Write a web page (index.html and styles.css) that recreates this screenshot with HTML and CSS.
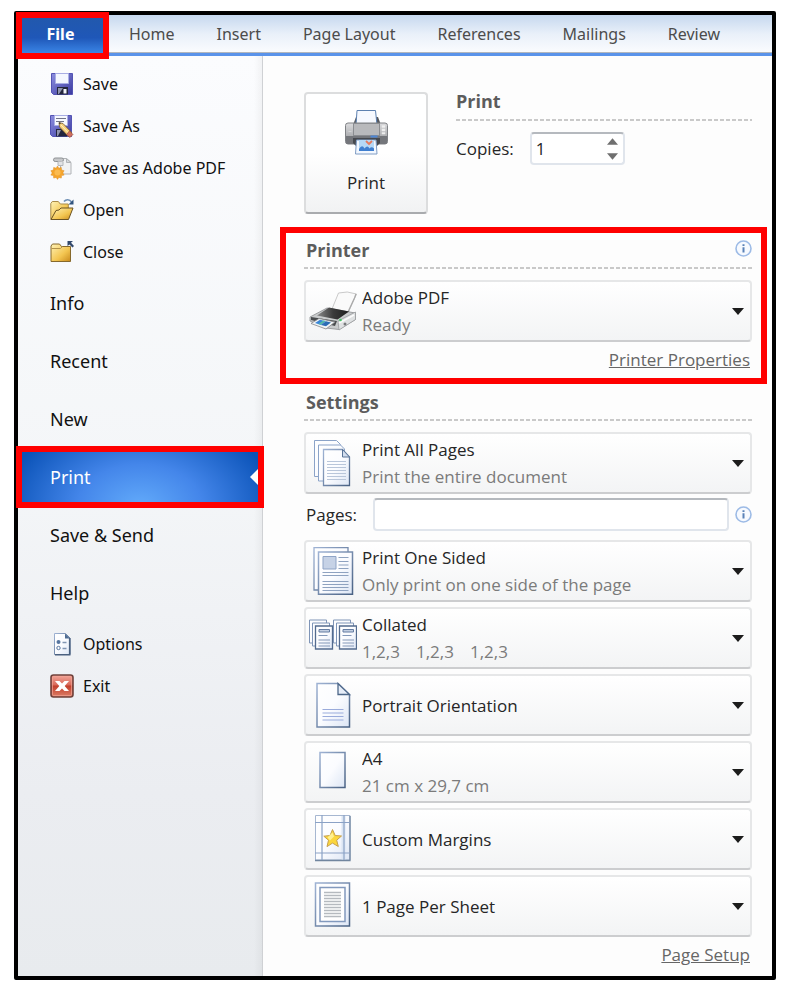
FILE: index.html
```html
<!DOCTYPE html>
<html lang="en">
<head>
  <meta charset="UTF-8">
  <meta name="viewport" content="width=device-width, initial-scale=1">
  <title>Print</title>
  <link rel="stylesheet" href="styles.css">
</head>
<body>

  <!-- shared gradients and symbols -->
  <svg class="defs" width="0" height="0" aria-hidden="true">
    <defs>
      <linearGradient id="paper" x1="0" y1="0" x2="1" y2="1">
        <stop offset="0" stop-color="#ffffff"/>
        <stop offset="0.5" stop-color="#fbfcff"/>
        <stop offset="1" stop-color="#dde6f5"/>
      </linearGradient>
      <linearGradient id="edge" x1="0" y1="0" x2="1" y2="1">
        <stop offset="0" stop-color="#9fb3d4"/>
        <stop offset="1" stop-color="#4a6284"/>
      </linearGradient>
      <linearGradient id="disk" x1="0" y1="0" x2="1" y2="1">
        <stop offset="0" stop-color="#8d8fe0"/>
        <stop offset="1" stop-color="#3a3aa0"/>
      </linearGradient>
      <linearGradient id="folder" x1="0" y1="0" x2="1" y2="1">
        <stop offset="0" stop-color="#fff3b8"/>
        <stop offset="0.6" stop-color="#f3c550"/>
        <stop offset="1" stop-color="#c98a1c"/>
      </linearGradient>
      <linearGradient id="red" x1="0" y1="0" x2="0" y2="1">
        <stop offset="0" stop-color="#f3a79b"/>
        <stop offset="0.45" stop-color="#d96a5a"/>
        <stop offset="0.5" stop-color="#c23f2c"/>
        <stop offset="1" stop-color="#dd8068"/>
      </linearGradient>
      <linearGradient id="metal" x1="0" y1="0" x2="0" y2="1">
        <stop offset="0" stop-color="#dcdcde"/>
        <stop offset="0.6" stop-color="#b0b1b4"/>
        <stop offset="1" stop-color="#7b7d82"/>
      </linearGradient>
      <linearGradient id="lid" x1="0" y1="0" x2="1" y2="0">
        <stop offset="0" stop-color="#8a8a8a"/>
        <stop offset="0.5" stop-color="#3b3b3b"/>
        <stop offset="1" stop-color="#1e1e1e"/>
      </linearGradient>
      <symbol id="caret" viewBox="0 0 12 7"><path d="M0 0h12L6 7z" fill="#1c1c1c"/></symbol>
      <symbol id="info" viewBox="0 0 17 17">
        <circle cx="8.5" cy="8.5" r="7.5" fill="#f7faff" stroke="#9dbbe6" stroke-width="1.6"/>
        <path d="M7.5 4.3h2v1.8h-2zM7.5 7.3h2v5.2h-2z" fill="#5b82b8"/>
      </symbol>
    </defs>
  </svg>

  <div class="window">

    <nav class="ribbon" aria-label="Ribbon">
      <a class="tab tab-file" href="#">File</a>
      <a class="tab" href="#">Home</a>
      <a class="tab" href="#">Insert</a>
      <a class="tab" href="#">Page Layout</a>
      <a class="tab" href="#">References</a>
      <a class="tab" href="#">Mailings</a>
      <a class="tab" href="#">Review</a>
    </nav>

    <div class="backstage">

      <nav class="sidebar" aria-label="File menu">
        <a class="command" href="#">
          <svg class="command-icon" viewBox="0 0 24 24">
            <path d="M1.500 1.500h21v21h-19l-2-2z" fill="url(#disk)" stroke="#5454b4"/>
            <path d="M5.500 1.500h13v10h-13z" fill="#f4f7ff" stroke="#a9aee4"/>
            <path d="M7 15h11v7.500H7z" fill="#23263c"/>
            <path d="M8 16h5l-4 6H8z" fill="#8f93ac"/>
            <path d="M13.500 17h3v4.500h-3z" fill="#f1f3fa"/>
          </svg>
          Save
        </a>
        <a class="command" href="#">
          <svg class="command-icon" viewBox="0 0 24 24">
            <path d="M.5 1.500h21v21h-19l-2-2z" fill="url(#disk)" stroke="#5454b4"/>
            <path d="M4.500 1.500h13v10h-13z" fill="#f7f9ff" stroke="#a9aee4"/>
            <path d="M6 4.500h10M6 7.500h8" stroke="#707488"/>
            <path d="M6 15h11v7.500H6z" fill="#23263c"/>
            <path d="M7 16h4l-3 6H7z" fill="#8f93ac"/>
            <path d="M9 8.500l4 1 9 9.500-3.500 3.500-9-9.500z" fill="#f4cf7b" stroke="#7c5a2c" stroke-width=".8"/>
            <path d="M11 11l9 9.500" stroke="#fff1c0"/>
            <path d="M19.500 17l3.500 3.500-3 3-3.500-3z" fill="#d0705f" stroke="#8f4436" stroke-width=".6"/>
            <path d="M9 8.500l2 .5-1.500 1.500z" fill="#2b2b2b"/>
          </svg>
          Save As
        </a>
        <a class="command" href="#">
          <svg class="command-icon" viewBox="0 0 24 24">
            <path d="M10.500 2.500h6l4.500 4v11.500H10.500z" fill="#f1f2f3" stroke="#b0b3b6"/>
            <path d="M16.500 2.500v4H21z" fill="#d4d7da" stroke="#b0b3b6"/>
            <rect x="3.500" y="2" width="10" height="3.500" rx="1.700" fill="#c6c8ca" stroke="#8f9295"/>
            <path d="M8 5.500v4h5v-4" fill="#e2e3e5" stroke="#b4b7ba"/>
            <path d="M7.500 10l1.300 2.200 2.500-.8.200 2.600 2.600.7-1.300 2.200 1.300 2.200-2.600.5-.2 2.500-2.500-.7-1.300 2-1.300-2-2.500.7-.2-2.500-2.600-.5 1.300-2.200L.9 14.700l2.600-.7.200-2.600 2.500.8z" fill="#f5a52c" stroke="#e08d1c" stroke-width=".5"/>
            <circle cx="7.500" cy="16.500" r="3" fill="#fbbb50"/>
          </svg>
          Save as Adobe PDF
        </a>
        <a class="command" href="#">
          <svg class="command-icon" viewBox="0 0 24 24">
            <path d="M.8 21.500V5.500l1.500-2h6l2 2.500h8v4" fill="url(#folder)" stroke="#a98a48"/>
            <path d="M1 21.500L6 12.500l3-.5 2-2h12l-4.500 11.500z" fill="url(#folder)" stroke="#6b5323"/>
            <path d="M14 3.500c2-2.500 5.500-2.500 7.500.5" fill="none" stroke="#6f8fb4" stroke-width="1.600"/>
            <path d="M23.500 1.500v5h-5z" fill="#31547f"/>
          </svg>
          Open
        </a>
        <a class="command" href="#">
          <svg class="command-icon" viewBox="0 0 24 24">
            <path d="M1 21.500V6l1.500-2h7l2 2.500H20.500v15z" fill="url(#folder)" stroke="#86692c"/>
            <path d="M1.500 8.500h9l2-2" fill="none" stroke="#b3924a"/>
            <path d="M17.500 1h5.500l-2 1.800L24 6l-1.500 1.500L19.500 4.500 17.500 6z" fill="#31486b"/>
          </svg>
          Close
        </a>

        <div class="places">
          <a class="place" href="#">Info</a>
          <a class="place" href="#">Recent</a>
          <a class="place" href="#">New</a>
          <a class="place place-active" href="#" aria-current="page">Print</a>
          <a class="place" href="#">Save &amp; Send</a>
          <a class="place" href="#">Help</a>
        </div>

        <a class="command" href="#">
          <svg class="command-icon" viewBox="0 0 24 24">
            <path d="M4.500 1.500h11l4.500 4.500v16.500H4.500z" fill="url(#paper)" stroke="url(#edge)"/>
            <path d="M15 1.500V6.500h5z" fill="#4f6d93"/>
            <path d="M19.700 6v16.700H5" fill="none" stroke="#4b6180" stroke-width="1.600"/>
            <circle cx="8.500" cy="10" r="2" fill="#56759f"/>
            <circle cx="8.500" cy="16" r="1.700" fill="#fff" stroke="#56759f"/>
            <path d="M12.500 10.500h4M12.500 16.500h4" stroke="#8296b3" stroke-width="1.300"/>
          </svg>
          Options
        </a>
        <a class="command" href="#">
          <svg class="command-icon" viewBox="0 0 24 24">
            <rect x="1" y="1" width="22" height="22" rx="2.500" fill="url(#red)" stroke="#70423b" stroke-width="1.600"/>
            <rect x="2.500" y="2.500" width="19" height="19" rx="1" fill="none" stroke="#f2a294" stroke-opacity=".7"/>
            <path d="M5 7h4.500l2.500 2.500L14.500 7H19l-4.300 5 4.300 5h-4.500L12 14.500 9.500 17H5l4.300-5z" fill="#fff"/>
          </svg>
          Exit
        </a>
      </nav>

      <main class="content">

        <section class="print-job">
          <button class="print-button" type="button">
            <svg class="print-icon" viewBox="0 0 48 48">
              <path d="M11 17l3-8h22l3 8z" fill="#55585e"/>
              <path d="M14 17L15 2.500h18.500L35 17z" fill="#f6f9ff" stroke="#5d81b0"/>
              <rect x="3.500" y="15" width="42" height="21" rx="2.500" fill="url(#metal)" stroke="#808286"/>
              <rect x="11.500" y="15.500" width="26" height="12" fill="#b8b9bc" stroke="#8b8d91"/>
              <path d="M4 28h41v6q0 2-2 2H6q-2 0-2-2z" fill="#74767b"/>
              <path d="M11 30h27v5l-3 3H14l-3-3z" fill="#46494f"/>
              <path d="M28.500 27.500h7v2h-7z" fill="#4d86d6"/>
              <path d="M6.500 23.500h3M40 17.500h3v2h-3zM40 21h3v2h-3zM40 24.500h3v1.500h-3z" fill="#f1f1f1" stroke="#e9e9e9" stroke-width=".5"/>
              <path d="M14.500 32h19.500l1 14H13.500z" fill="#f3f8ff" stroke="#7f9cc4"/>
              <path d="M17 32h15v11H17z" fill="#b5d8f7"/>
              <path d="M24 33l3 3 3-3" fill="none" stroke="#e67a5e" stroke-width="1.800"/>
              <path d="M17 41q3-5 5.500-.5 3-4 5 0 2-2.500 4.500 0V43H17z" fill="#3f7fd0"/>
            </svg>
            Print
          </button>
          <div class="job-fields">
            <h2 class="heading">Print</h2>
            <div class="copies">
              <label for="copies">Copies:</label>
              <div class="spinner">
                <input id="copies" class="spinner-input" type="text" inputmode="numeric" value="1">
                <div class="spinner-buttons">
                  <button type="button" aria-label="More copies"><svg viewBox="0 0 12 7"><path d="M0 7h12L6 0z" fill="#6f6f6f"/></svg></button>
                  <button type="button" aria-label="Fewer copies"><svg viewBox="0 0 12 7"><path d="M0 0h12L6 7z" fill="#6f6f6f"/></svg></button>
                </div>
              </div>
            </div>
          </div>
        </section>

        <section class="printer">
          <h2 class="heading">Printer <button class="info" type="button" aria-label="Printer status"><svg><use href="#info"/></svg></button></h2>
          <label class="picker">
            <svg class="picker-icon" viewBox="0 0 48 48">
              <path d="M23 22L29.500 6Q38 3.500 47.500 7L39 26z" fill="#fafafa" stroke="#bdbdbd" stroke-width=".8"/>
              <path d="M39 25l6.500-14 1.500-4" fill="none" stroke="#a9a9a9" stroke-width="1.300"/>
              <path d="M1 30L18 21l28.500 5v6.500L30 42.500 17 41 1 34z" fill="#c9cbcc" stroke="#8b8d8f" stroke-width=".8"/>
              <path d="M8 28.500L20 20.500l20 4-11.500 8z" fill="url(#lid)"/>
              <path d="M29 34l17.500-9v7.500L30 43z" fill="#dfe1e2" stroke="#9b9d9f" stroke-width=".8"/>
              <path d="M2 30l26 4-2 5-24-6z" fill="#4a4c4e"/>
              <path d="M30 36l15-8" stroke="#fbfbfb" stroke-width="1.500"/>
              <path d="M2 36.500l8-5 16 3.500-9 7z" fill="#f2f4f5" stroke="#858789" stroke-width=".8"/>
              <path d="M6 36l5-3.200 6 1.500-5 3.700z" fill="#3c86d8"/>
              <path d="M12 38l5-3.700 5 1.200-5 3.700z" fill="#2b6db5"/>
              <path d="M9.500 37l5-3.500 2 .5-5 3.700z" fill="#58c0a0"/>
              <circle cx="31.500" cy="33" r="1.300" fill="#46c464"/>
              <circle cx="36" cy="37" r="1.500" fill="#77797b"/>
            </svg>
            <span class="picker-text">
              <select aria-label="Printer"><option>Adobe PDF</option></select>
              <span class="hint">Ready</span>
            </span>
            <svg class="caret"><use href="#caret"/></svg>
          </label>
          <a class="more" href="#">Printer Properties</a>
        </section>

        <section class="settings">
          <h2 class="heading">Settings</h2>
          <label class="picker">
            <svg class="picker-icon" viewBox="0 0 48 48">
              <path d="M5.500 1.500h22l4 4V37.500h-26z" fill="url(#paper)" stroke="#8ba3c8"/>
              <path d="M9.500 6h22l4 4V42h-26z" fill="url(#paper)" stroke="#8ba3c8"/>
              <path d="M14.500 10.500h19l7 7.500v28.500h-26z" fill="url(#paper)" stroke="url(#edge)" stroke-width="1.300"/>
              <path d="M33.500 10.500V18h7z" fill="#d3deee" stroke="#5a7497"/>
              <path d="M18 22.500h19M18 25.500h19M18 28.500h19M18 31.500h19M18 34.500h19M18 37.500h19M18 40.500h19" stroke="#b9c6da"/>
            </svg>
            <span class="picker-text">
              <select aria-label="Pages to print"><option>Print All Pages</option></select>
              <span class="hint">Print the entire document</span>
            </span>
            <svg class="caret"><use href="#caret"/></svg>
          </label>

          <div class="pages">
            <label for="pages">Pages:</label>
            <input id="pages" class="pages-input" type="text">
            <button class="info" type="button" aria-label="About page ranges"><svg><use href="#info"/></svg></button>
          </div>

          <div class="picker-list">
            <label class="picker">
              <svg class="picker-icon" viewBox="0 0 48 48">
                <path d="M5 .7H39V43H5z" fill="url(#paper)" stroke="url(#edge)" stroke-width="1.300"/>
                <path d="M9.500 5h34v42.300h-34z" fill="url(#paper)" stroke="url(#edge)" stroke-width="1.500"/>
                <path d="M14 9.500h13V22H14z" fill="#c6d2e6" stroke="#8fa4c6"/>
                <path d="M29.500 10.500h10M29.500 14.500h10M29.500 18h10M29.500 21.500h10M13.500 25.500h26M13.500 28.500h26M13.500 34.500h26M13.500 37.500h26M13.500 40.500h26M13.500 43.500h26" stroke="#8ea2c0" stroke-width="1.200"/>
              </svg>
              <span class="picker-text">
                <select aria-label="Sides"><option>Print One Sided</option></select>
                <span class="hint">Only print on one side of the page</span>
              </span>
              <svg class="caret"><use href="#caret"/></svg>
            </label>

            <label class="picker">
              <svg class="picker-icon" viewBox="0 0 48 48">
                <g id="stack">
                  <path d="M.5 6h17v23H.5z" fill="url(#paper)" stroke="#7f95b7"/>
                  <path d="M3.500 9h17v23h-17z" fill="url(#paper)" stroke="#7f95b7"/>
                  <path d="M6.500 12h17v23h-17z" fill="url(#paper)" stroke="#536b8e" stroke-width="1.300"/>
                  <path d="M10 15.500h10.500v2.500H10z" fill="#c3cfe2" stroke="#647da3"/>
                  <path d="M9.500 21.500h9M9.500 26h11.500M9.500 29h11.500M9.500 32h11.500" stroke="#8398b8" stroke-width="1.200"/>
                </g>
                <use href="#stack" x="24"/>
              </svg>
              <span class="picker-text">
                <select aria-label="Collation"><option>Collated</option></select>
                <span class="hint hint-sets"><span>1,2,3</span><span>1,2,3</span><span>1,2,3</span></span>
              </span>
              <svg class="caret"><use href="#caret"/></svg>
            </label>

            <label class="picker">
              <svg class="picker-icon" viewBox="0 0 48 48">
                <path d="M8 2.500h21L40.500 13.500V46H8z" fill="url(#paper)" stroke="url(#edge)" stroke-width="1.500"/>
                <path d="M29 2.500v11h11.500z" fill="#e6edf8" stroke="#4d6789" stroke-width="1.300"/>
                <path d="M13.500 28.500h21M13.500 32h21M13.500 35.500h21M13.500 39h21" stroke="#9aabdb" stroke-width="1.200"/>
              </svg>
              <span class="picker-text">
                <select aria-label="Orientation"><option>Portrait Orientation</option></select>
              </span>
              <svg class="caret"><use href="#caret"/></svg>
            </label>

            <label class="picker">
              <svg class="picker-icon" viewBox="0 0 48 48">
                <path d="M11 4.500H36v35H11z" fill="url(#paper)" stroke="url(#edge)" stroke-width="1.500"/>
              </svg>
              <span class="picker-text">
                <select aria-label="Paper size"><option>A4</option></select>
                <span class="hint">21 cm x 29,7 cm</span>
              </span>
              <svg class="caret"><use href="#caret"/></svg>
            </label>

            <label class="picker">
              <svg class="picker-icon" viewBox="0 0 48 48">
                <path d="M6.500.5H41V45H6.500z" fill="url(#paper)" stroke="#a6b7d1"/>
                <path d="M32.500 1h4v44h-4z" fill="#dbe5f3"/>
                <path d="M41 1v44.500H6" fill="none" stroke="#71869f" stroke-width="1.300"/>
                <path d="M13 0v45M35 0v45M6 7.500h35M6 38h35" stroke="#8ba2c6" stroke-width="1.200"/>
                <path d="M23.500 14.500l2.700 6 6.300.5-4.800 4.200 1.600 6.300-5.800-3.400-5.500 3.500 1.500-6.400-4.700-4 6.200-.7z" fill="#fbd63d" stroke="#c6a04e" stroke-linejoin="round"/>
                <path d="M23.400 17.500l1.600 4-4 4-2.500-3z" fill="#fff08f"/>
              </svg>
              <span class="picker-text">
                <select aria-label="Margins"><option>Custom Margins</option></select>
              </span>
              <svg class="caret"><use href="#caret"/></svg>
            </label>

            <label class="picker">
              <svg class="picker-icon" viewBox="0 0 48 48">
                <path d="M6.500 1H40.500v43H6.500z" fill="url(#paper)" stroke="url(#edge)" stroke-width="1.500"/>
                <path d="M11 5.500h25v34H11z" fill="#fff" stroke="#8299bd" stroke-width="1.500"/>
                <path d="M15 10.500h17M15 13.500h17M15 16.500h17M15 19.500h17M15 22.500h17M15 25.500h17M15 28.500h17M15 31.500h17M15 34.500h17" stroke="#b5babf" stroke-width="1.400"/>
              </svg>
              <span class="picker-text">
                <select aria-label="Pages per sheet"><option>1 Page Per Sheet</option></select>
              </span>
              <svg class="caret"><use href="#caret"/></svg>
            </label>
          </div>

          <a class="more" href="#">Page Setup</a>
        </section>

      </main>
    </div>
  </div>

</body>
</html>
```

FILE: styles.css
```css
:root {
  --mark: #ff0000;
  --text: #262626;
  --muted: #7b7b7b;
  --line: #dcddde;
}

* {
  box-sizing: border-box;
}

body {
  margin: 0;
  padding: 11px 11px 11px 14px;
  background: #ffffff;
  color: var(--text);
  font-family: "Open Sans", "Segoe UI", sans-serif;
  font-size: 17px;
  line-height: 27px;
}

a {
  color: inherit;
  text-decoration: none;
}

button,
input,
select {
  font: inherit;
  color: inherit;
}

.defs {
  position: absolute;
}

.window {
  display: flex;
  flex-direction: column;
  min-height: calc(100vh - 22px);
  border: 4px solid #000000;
  border-radius: 2px;
}

.ribbon,
.sidebar {
  font-family: "Noto Sans", "Segoe UI", sans-serif;
}

/* ribbon */
.ribbon {
  display: flex;
  height: 41px;
  background: linear-gradient(to bottom, #c6d8ef, #e9f0f9 50%, #fbfcfe);
  border-bottom: 3px solid #5a93ea;
  box-shadow: inset 0 -1px #b3b7bd;
}

.tab {
  padding: 6px 21px;
  color: #4c4c4c;
  font-size: 16px;
}

.tab-file {
  position: relative;
  width: 85px;
  margin-right: 5px;
  text-align: center;
  color: #ffffff;
  font-weight: bold;
  background: linear-gradient(to bottom, #2259ab, #1f57b8 60%, #3a85e6);
}

.tab-file::after,
.place-active::after {
  content: "";
  position: absolute;
  inset: -3px -6px -6px -2px;
  border: 6px solid var(--mark);
}

/* sidebar */
.backstage {
  display: flex;
  flex: 1;
}

.sidebar {
  flex: none;
  width: 245px;
  padding-top: 7px;
  color: #111111;
  background:
    linear-gradient(to left, rgba(0, 0, 0, 0.04), rgba(0, 0, 0, 0) 8px),
    linear-gradient(to bottom, #fbfcfe, #f4f6f8 45%, #ebedf1 80%, #e8ebee);
  border-right: 1px solid #cfd1d4;
}

.command {
  display: flex;
  align-items: center;
  gap: 9px;
  height: 42px;
  padding-left: 32px;
  font-size: 16px;
}

.command-icon {
  width: 24px;
  height: 24px;
}

.places {
  margin: 1px 0;
}

.place {
  display: flex;
  align-items: center;
  height: 58px;
  padding-left: 32px;
  font-size: 18px;
}

.place-active {
  position: relative;
  color: #ffffff;
  background: radial-gradient(ellipse 56% 160% at 50% 100%, #62aafa, #4486ea 45%, #0b53b8);
}

.place-active::before {
  content: "";
  position: absolute;
  right: 4px;
  top: 21px;
  border: 8px solid transparent;
  border-right-color: #ffffff;
  border-left-width: 0;
}

.place-active::after {
  inset: -2px;
}

/* print settings */
.content {
  flex: 1;
  min-width: 0;
  padding: 36px 20px 0 41px;
  background: #fdfdfd;
}

.print-job {
  display: flex;
  gap: 28px;
}

.print-button {
  display: flex;
  flex-direction: column;
  align-items: center;
  gap: 13px;
  width: 124px;
  height: 122px;
  padding-top: 14px;
  background: linear-gradient(to bottom, #ffffff 50%, #f1f2f3);
  border: 2px solid var(--line);
  border-bottom-color: #a9abae;
  border-radius: 4px;
}

.print-icon {
  width: 48px;
  height: 48px;
}

.job-fields {
  flex: 1;
}

.heading {
  display: flex;
  align-items: center;
  justify-content: space-between;
  height: 36px;
  margin: 0;
  padding: 0 0 2px 2px;
  color: #5c5c5c;
  font-size: 18px;
  font-weight: bold;
  background: repeating-linear-gradient(to right, #c9c9c9 0 4px, transparent 4px 6px) left bottom / 100% 2px no-repeat;
}

.job-fields .heading {
  height: 29px;
  padding: 0 0 11px;
}

.copies {
  display: flex;
  align-items: center;
  gap: 16px;
  padding-top: 11px;
}

.spinner {
  display: flex;
  width: 95px;
}

.spinner,
.pages-input {
  height: 33px;
  background: #ffffff;
  border: 2px solid #e0e5ec;
  border-top-color: #b5b9be;
  border-radius: 4px;
}

.spinner-input {
  flex: 1;
  min-width: 0;
  padding: 0 4px;
  background: none;
  border: 0;
}

.spinner-buttons {
  display: flex;
  flex-direction: column;
  justify-content: center;
  gap: 8px;
  padding-right: 5px;
}

.spinner-buttons button,
.info {
  display: flex;
  padding: 0;
  background: none;
  border: 0;
}

.spinner-buttons svg {
  width: 11px;
  height: 7px;
}

.info svg {
  width: 17px;
  height: 17px;
}

.printer {
  margin: 13px -15px 0 -24px;
  padding: 0 9px 0 18px;
  border: 6px solid var(--mark);
}

.settings .heading {
  margin-top: 1px;
}

.printer .info {
  margin-bottom: 4px;
}

.picker {
  display: flex;
  align-items: center;
  height: 62px;
  padding: 0 6px 0 3px;
  background: linear-gradient(to bottom, #ffffff, #f3f4f5);
  border: 2px solid #e6e7e8;
  border-bottom-color: #cccdcf;
  border-radius: 4px;
}

.heading + .picker {
  margin-top: 11px;
}

.picker-icon {
  flex: none;
  width: 48px;
  height: 48px;
  margin-right: 5px;
}

.picker-text {
  display: flex;
  flex: 1;
  flex-direction: column;
  min-width: 0;
}

.picker select {
  appearance: none;
  height: 27px;
  padding: 0;
  background: none;
  border: 0;
}

.hint {
  color: var(--muted);
}

.hint-sets {
  display: flex;
  gap: 16px;
}

.caret {
  flex: none;
  width: 12px;
  height: 7px;
}

.more {
  display: block;
  width: fit-content;
  margin: 4px 2px 0 auto;
  color: #666666;
  text-decoration: underline;
}

.printer .more {
  margin-bottom: 5px;
}

.pages {
  display: flex;
  align-items: center;
  gap: 6px;
  padding: 4px 0 9px 2px;
}

.pages label {
  width: 61px;
}

.pages-input {
  flex: 1;
  min-width: 0;
}

.picker-list {
  display: grid;
  gap: 5px;
}
```
